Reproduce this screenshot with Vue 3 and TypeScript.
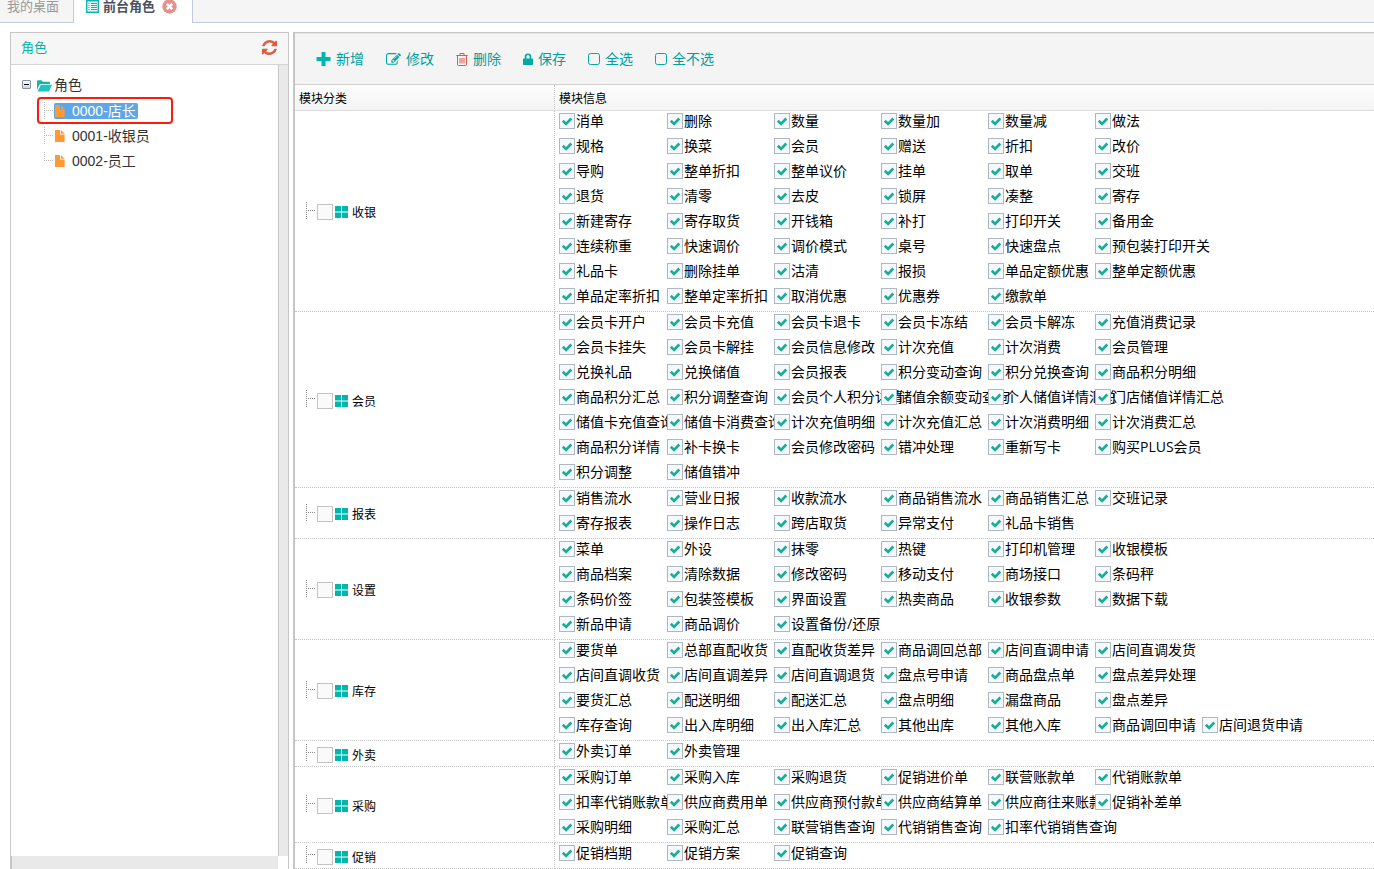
<script setup lang="ts">
import { reactive, ref } from 'vue'

interface Item { name: string; checked: boolean }
interface Group { name: string; checked: boolean; lines: Item[][] }

const source: [string, string[]][] = [
  ['收银', [
    '消单 删除 数量 数量加 数量减 做法',
    '规格 换菜 会员 赠送 折扣 改价',
    '导购 整单折扣 整单议价 挂单 取单 交班',
    '退货 清零 去皮 锁屏 凑整 寄存',
    '新建寄存 寄存取货 开钱箱 补打 打印开关 备用金',
    '连续称重 快速调价 调价模式 桌号 快速盘点 预包装打印开关',
    '礼品卡 删除挂单 沽清 报损 单品定额优惠 整单定额优惠',
    '单品定率折扣 整单定率折扣 取消优惠 优惠券 缴款单',
  ]],
  ['会员', [
    '会员卡开户 会员卡充值 会员卡退卡 会员卡冻结 会员卡解冻 充值消费记录',
    '会员卡挂失 会员卡解挂 会员信息修改 计次充值 计次消费 会员管理',
    '兑换礼品 兑换储值 会员报表 积分变动查询 积分兑换查询 商品积分明细',
    '商品积分汇总 积分调整查询 会员个人积分详情 储值余额变动查询 个人储值详情汇总 门店储值详情汇总',
    '储值卡充值查询 储值卡消费查询 计次充值明细 计次充值汇总 计次消费明细 计次消费汇总',
    '商品积分详情 补卡换卡 会员修改密码 错冲处理 重新写卡 购买PLUS会员',
    '积分调整 储值错冲',
  ]],
  ['报表', [
    '销售流水 营业日报 收款流水 商品销售流水 商品销售汇总 交班记录',
    '寄存报表 操作日志 跨店取货 异常支付 礼品卡销售',
  ]],
  ['设置', [
    '菜单 外设 抹零 热键 打印机管理 收银模板',
    '商品档案 清除数据 修改密码 移动支付 商场接口 条码秤',
    '条码价签 包装签模板 界面设置 热卖商品 收银参数 数据下载',
    '新品申请 商品调价 设置备份/还原',
  ]],
  ['库存', [
    '要货单 总部直配收货 直配收货差异 商品调回总部 店间直调申请 店间直调发货',
    '店间直调收货 店间直调差异 店间直调退货 盘点号申请 商品盘点单 盘点差异处理',
    '要货汇总 配送明细 配送汇总 盘点明细 漏盘商品 盘点差异',
    '库存查询 出入库明细 出入库汇总 其他出库 其他入库 商品调回申请 店间退货申请',
  ]],
  ['外卖', ['外卖订单 外卖管理']],
  ['采购', [
    '采购订单 采购入库 采购退货 促销进价单 联营账款单 代销账款单',
    '扣率代销账款单 供应商费用单 供应商预付款单 供应商结算单 供应商往来账款 促销补差单',
    '采购明细 采购汇总 联营销售查询 代销销售查询 扣率代销销售查询',
  ]],
  ['促销', ['促销档期 促销方案 促销查询']],
]

const groups = reactive<Group[]>(source.map(([name, lines]) => ({
  name,
  checked: false,
  lines: lines.map(l => l.split(' ').map(n => ({ name: n, checked: true }))),
})))

const roles = ['0000-店长', '0001-收银员', '0002-员工']
const selected = ref(roles[0])

function setAll(value: boolean) {
  groups.forEach(g => g.lines.forEach(l => l.forEach(i => { i.checked = value })))
}
</script>

<template>
  <div class="page">
    <nav class="tabs">
      <a class="tab" href="#desktop">我的桌面</a>
      <div class="tab active">
        <svg class="list-icon" viewBox="0 0 13 13" width="13" height="13">
          <path d="M.7.7h11.6v11.6H.7z" fill="#e4fbf9" stroke="#12b5ad" stroke-width="1.4" />
          <path d="M2.5 3.5h1M2.5 5.5h1M2.5 7.5h1M2.5 9.5h1M5 3.5h6M5 5.5h6M5 7.5h6M5 9.5h6" stroke="#12b5ad" />
        </svg>
        <a href="#roles">前台角色</a>
        <button class="close" type="button" aria-label="关闭">
          <svg viewBox="0 0 15 15" width="15" height="15">
            <circle cx="7.5" cy="7.5" r="7.2" fill="#e5918b" />
            <path d="M4.800 4.800l5.400 5.400M10.200 4.800l-5.400 5.400" stroke="#fff" stroke-width="2.6" />
          </svg>
        </button>
      </div>
    </nav>

    <main class="body">
      <aside class="side">
        <header class="side-head">
          <h2>角色</h2>
          <button type="button" aria-label="刷新">
            <svg viewBox="0 0 1536 1536" width="15" height="15">
              <path fill="#dd5a43" d="M1511 928q0 5-1 7-64 268-268 434.500T764 1536q-146 0-282.500-55T238 1324l-129 129q-19 19-45 19t-45-19-19-45V960q0-26 19-45t45-19h448q26 0 45 19t19 45-19 45l-137 137q71 66 161 102t187 36q134 0 250-65t186-179q11-17 53-117 8-23 30-23h192q13 0 22.500 9.500t9.500 22.500zm25-800v448q0 26-19 45t-45 19h-448q-26 0-45-19t-19-45 19-45l138-138Q969 256 768 256q-134 0-250 65T332 500q-11 17-53 117-8 23-30 23H50q-13 0-22.500-9.500T18 608v-7q65-268 270-434.500T768 0q146 0 284 55.500T1297 212l130-129q19-19 45-19t45 19 19 45z" />
            </svg>
          </button>
        </header>
        <div class="scroll-area">
          <div class="tree">
            <div class="root">
              <button class="toggle" type="button" aria-label="折叠"></button>
              <svg class="folder" viewBox="0 0 15 12" width="15" height="12">
                <path d="M0 10V1.200Q0 .3 1 .3h3.500l1.200 1.400h6Q13 1.700 13 3v1H4Q2.600 4 2 5.200z" fill="#12b5ad" />
                <path d="M3.800 4.800H15l-2.700 6q-.3.700-1 .7H.6z" fill="#1cc6bd" />
              </svg>
              <span>角色</span>
            </div>
            <ul>
              <li v-for="r in roles" :key="r" :class="{ picked: r === selected }">
                <button class="role" type="button" @click="selected = r">
                  <svg viewBox="0 0 10 12" width="10" height="12">
                    <path d="M0 0h5v4.600h4.600V12H0zM6 0l3.600 3.700H6z" fill="#ff9933" />
                  </svg>
                  <span>{{ r }}</span>
                </button>
              </li>
            </ul>
          </div>
          <div class="vbar"></div>
        </div>
        <div class="hbar"></div>
      </aside>

      <section class="main">
        <div class="toolbar">
          <button type="button">
            <svg viewBox="0 0 15 14" width="15" height="14"><path d="M5.500 0h4v5h5v4h-5v5h-4V9h-5V5h5z" fill="#00b7ae" /></svg>新增
          </button>
          <button type="button">
            <svg viewBox="0 0 1792 1536" width="15" height="13"><path fill="#00a9a1" d="M888 1056l116-116-152-152-116 116v56h96v96h56zm440-720q-16-16-33 1L945 687q-17 17-1 33t33-1l350-350q17-17 1-33zm80 594v190q0 119-84.500 203.500T1120 1408H288q-119 0-203.500-84.500T0 1120V288Q0 169 84.500 84.500T288 0h832q63 0 117 25 15 7 18 23 3 17-9 29l-49 49q-14 14-32 8-23-6-45-6H288q-66 0-113 47t-47 113v832q0 66 47 113t113 47h832q66 0 113-47t47-113V994q0-13 9-22l64-64q15-15 35-7t20 29zm-96-738l288 288-672 672H640V864zm444 132l-92 92-288-288 92-92q28-28 68-28t68 28l152 152q28 28 28 68t-28 68z" /></svg>修改
          </button>
          <button type="button">
            <svg viewBox="0 0 12 13" width="12" height="13"><path d="M.3 2.500h11.400M4 2.500V.5h4v2M1.500 3v8.200q0 1.300 1 1.300h7q1 0 1-1.300V3M4 5v5.500M6 5v5.500M8 5v5.500" fill="none" stroke="#dd5a43" /></svg>删除
          </button>
          <button type="button">
            <svg viewBox="0 0 10 12" width="10" height="12"><path d="M1.700 5.500V3.700a3.300 3.300 0 0 1 6.600 0v1.800h.9q.8 0 .8.800v4.900q0 .8-.8.800H.8q-.8 0-.8-.8V6.300q0-.8.8-.8zm1.700 0h3.200V3.700a1.600 1.600 0 0 0-3.200 0z" fill="#00a9a1" /></svg>保存
          </button>
          <button type="button" @click="setAll(true)">
            <svg viewBox="0 0 12 12" width="12" height="12"><rect x=".5" y=".5" width="11" height="11" rx="2" fill="none" stroke="#00a9a1" /></svg>全选
          </button>
          <button type="button" @click="setAll(false)">
            <svg viewBox="0 0 12 12" width="12" height="12"><rect x=".5" y=".5" width="11" height="11" rx="2" fill="none" stroke="#00a9a1" /></svg>全不选
          </button>
        </div>

        <table>
          <colgroup><col class="col-name"><col></colgroup>
          <thead>
            <tr><th scope="col">模块分类</th><th scope="col">模块信息</th></tr>
          </thead>
          <tbody>
            <tr v-for="g in groups" :key="g.name">
              <td class="name">
                <label class="group">
                  <span class="branch"></span>
                  <input v-model="g.checked" type="checkbox">
                  <svg viewBox="0 0 13 12" width="13" height="12"><path d="M0 0h6v5.500H0zM7 0h6v5.500H7zM0 6.500h6V12H0zM7 6.500h6V12H7z" fill="#00b7ae" /></svg>
                  <span class="group-name">{{ g.name }}</span>
                </label>
              </td>
              <td class="info">
                <div v-for="(line, n) in g.lines" :key="n" class="line">
                  <label v-for="i in line" :key="i.name" class="item">
                    <input v-model="i.checked" type="checkbox"><span>{{ i.name }}</span>
                  </label>
                </div>
              </td>
            </tr>
          </tbody>
        </table>
      </section>
    </main>
  </div>
</template>

<style>
body { margin: 0; background: #fff; }
</style>

<style scoped>
.page {
  display: flex;
  flex-direction: column;
  min-height: 100vh;
  overflow: hidden;
  color: #000;
  font: 14px/20px "Open Sans", "Noto Sans CJK SC", sans-serif;
}
.page * { box-sizing: border-box; }
button {
  display: flex;
  align-items: center;
  margin: 0;
  padding: 0;
  border: 0;
  background: none;
  color: inherit;
  font: inherit;
  cursor: pointer;
}
svg { display: block; flex: none; }
a { color: inherit; text-decoration: none; }

.tabs {
  display: flex;
  height: 23px;
  border-bottom: 1px solid #c3cadb;
  background: #f5f5f5;
  font-size: 13px;
  line-height: 12px;
}
.tab {
  display: flex;
  align-items: center;
  height: 22px;
  padding: 0 14px 10px 7px;
  color: #999;
}
.tab.active {
  height: 23px;
  padding: 0 15px 11px 12px;
  border: solid #c3cadb;
  border-width: 0 1px;
  background: #fff;
  color: #4a5264;
  font-weight: bold;
}
.list-icon { margin-right: 4px; }
.close { margin-left: 7px; }

.body {
  display: flex;
  flex: 1;
  gap: 4px;
  padding: 9px 0 0 10px;
}
.side {
  display: flex;
  flex: none;
  flex-direction: column;
  width: 279px;
  border: solid #c6c6c6;
  border-width: 1px 1px 0;
}
.side-head {
  display: flex;
  align-items: center;
  justify-content: space-between;
  height: 32px;
  padding: 0 11px 3px 10px;
  border-bottom: 1px solid #d5d5d5;
  background: #f6f6f6;
  color: #00b7ae;
}
.side-head h2 {
  margin: 0;
  font-size: 13px;
  font-weight: normal;
}
.scroll-area { display: flex; flex: 1; }
.tree { flex: 1; padding: 7px 0 0 11px; color: #333; }
.vbar {
  width: 10px;
  border-left: 1px solid #c6c6c6;
  background: #e9e9e9;
}
.hbar {
  height: 13px;
  margin-right: 10px;
  border-left: 1px solid #c6c6c6;
  background: #e9e9e9;
}
.root {
  display: flex;
  align-items: center;
  height: 25px;
}
.toggle {
  justify-content: center;
  width: 9px;
  height: 9px;
  border: 1px solid #7e95ad;
  border-radius: 1px;
  background: linear-gradient(#fff, #d8d4c8);
}
.toggle::before { width: 5px; height: 1px; background: #000; content: ""; }
.folder { margin: 2px 2px 0 6px; }
ul {
  margin: 0 0 0 15px;
  padding: 0;
  list-style: none;
  font-family: "Liberation Sans", "Noto Sans CJK SC", sans-serif;
}
li {
  display: flex;
  align-items: center;
  width: 136px;
  height: 25px;
  padding-left: 7px;
}
li::before {
  width: 9px;
  height: 17px;
  background:
    repeating-linear-gradient(to bottom, #b5b5b5 0 1px, transparent 1px 2px) 0 0 / 1px 100% no-repeat,
    repeating-linear-gradient(to right, #b5b5b5 0 1px, transparent 1px 2px) 0 8px / 100% 1px no-repeat;
  content: "";
}
li:last-child::before {
  background:
    repeating-linear-gradient(to bottom, #b5b5b5 0 1px, transparent 1px 2px) 0 0 / 1px 9px no-repeat,
    repeating-linear-gradient(to right, #b5b5b5 0 1px, transparent 1px 2px) 0 8px / 100% 1px no-repeat;
}
li.picked {
  height: 27px;
  margin-bottom: -1px;
  padding-left: 5px;
  border: 2px solid #ff1a10;
  border-radius: 4px;
}
.role {
  gap: 7px;
  height: 16px;
  margin-left: 1px;
  padding: 0 2px 0 1px;
  border-radius: 2px;
  line-height: 16px;
}
.picked .role { background: #5ea6e8; color: #fff; }

.main {
  flex: 1;
  min-width: 0;
  border: solid #c6c6c6;
  border-width: 1px 0 0 2px;
}
.toolbar {
  display: flex;
  align-items: center;
  gap: 22px;
  height: 52px;
  padding-left: 21px;
  border-top: 1px solid #e2e2e2;
  border-bottom: 1px solid #d0d0d0;
  background: #f4f4f4;
  color: #00a0a0;
}
.toolbar button { gap: 5px; }

table {
  width: 100%;
  border-collapse: separate;
  border-spacing: 0;
  table-layout: fixed;
}
.col-name { width: 260px; }
th, td { padding: 0; text-align: left; font-weight: normal; }
th {
  height: 26px;
  padding: 2px 0 0 4px;
  border-bottom: 1px solid #ddd;
  background: linear-gradient(#fdfdfd, #f4f4f4);
  font-size: 12px;
}
th:first-child, .name { border-right: 1px dotted #c4c4c4; }
td { border-bottom: 1px dotted #c4c4c4; }
.group {
  display: flex;
  align-items: center;
  height: 22px;
  padding: 2px 0 0 11px;
  font-size: 12px;
}
.group svg { margin: 0 4px 0 2px; }
.group-name { padding-top: 2px; }
.branch {
  width: 9px;
  height: 18px;
  margin: 0 2px 3px 0;
  background:
    repeating-linear-gradient(to bottom, #888 0 1px, transparent 1px 2px) 0 0 / 1px 100% no-repeat,
    repeating-linear-gradient(to right, #888 0 1px, transparent 1px 2px) 0 8px / 100% 1px no-repeat;
}
input {
  flex: none;
  width: 16px;
  height: 16px;
  margin: 0;
  border: 1px solid #c4c4c4;
  background: #fafafa;
  appearance: none;
}
.item input { border-color: #adb8c0; background: #f5f9fd; }
.item input:checked {
  background: #f5f9fd url("data:image/svg+xml,%3Csvg xmlns='http://www.w3.org/2000/svg' viewBox='0 0 14 14'%3E%3Cpath d='M2.800 6.800l3.300 3.200 5.200-5.500' fill='none' stroke='%2318ad94' stroke-width='2.600'/%3E%3C/svg%3E") center / 14px 14px;
}
.info { padding-left: 4px; }
.line { display: flex; height: 25px; }
.item {
  display: flex;
  flex: none;
  align-items: center;
  gap: 1px;
  width: 107px;
  height: 20px;
  white-space: nowrap;
}
.item:first-child { width: 108px; }
</style>
